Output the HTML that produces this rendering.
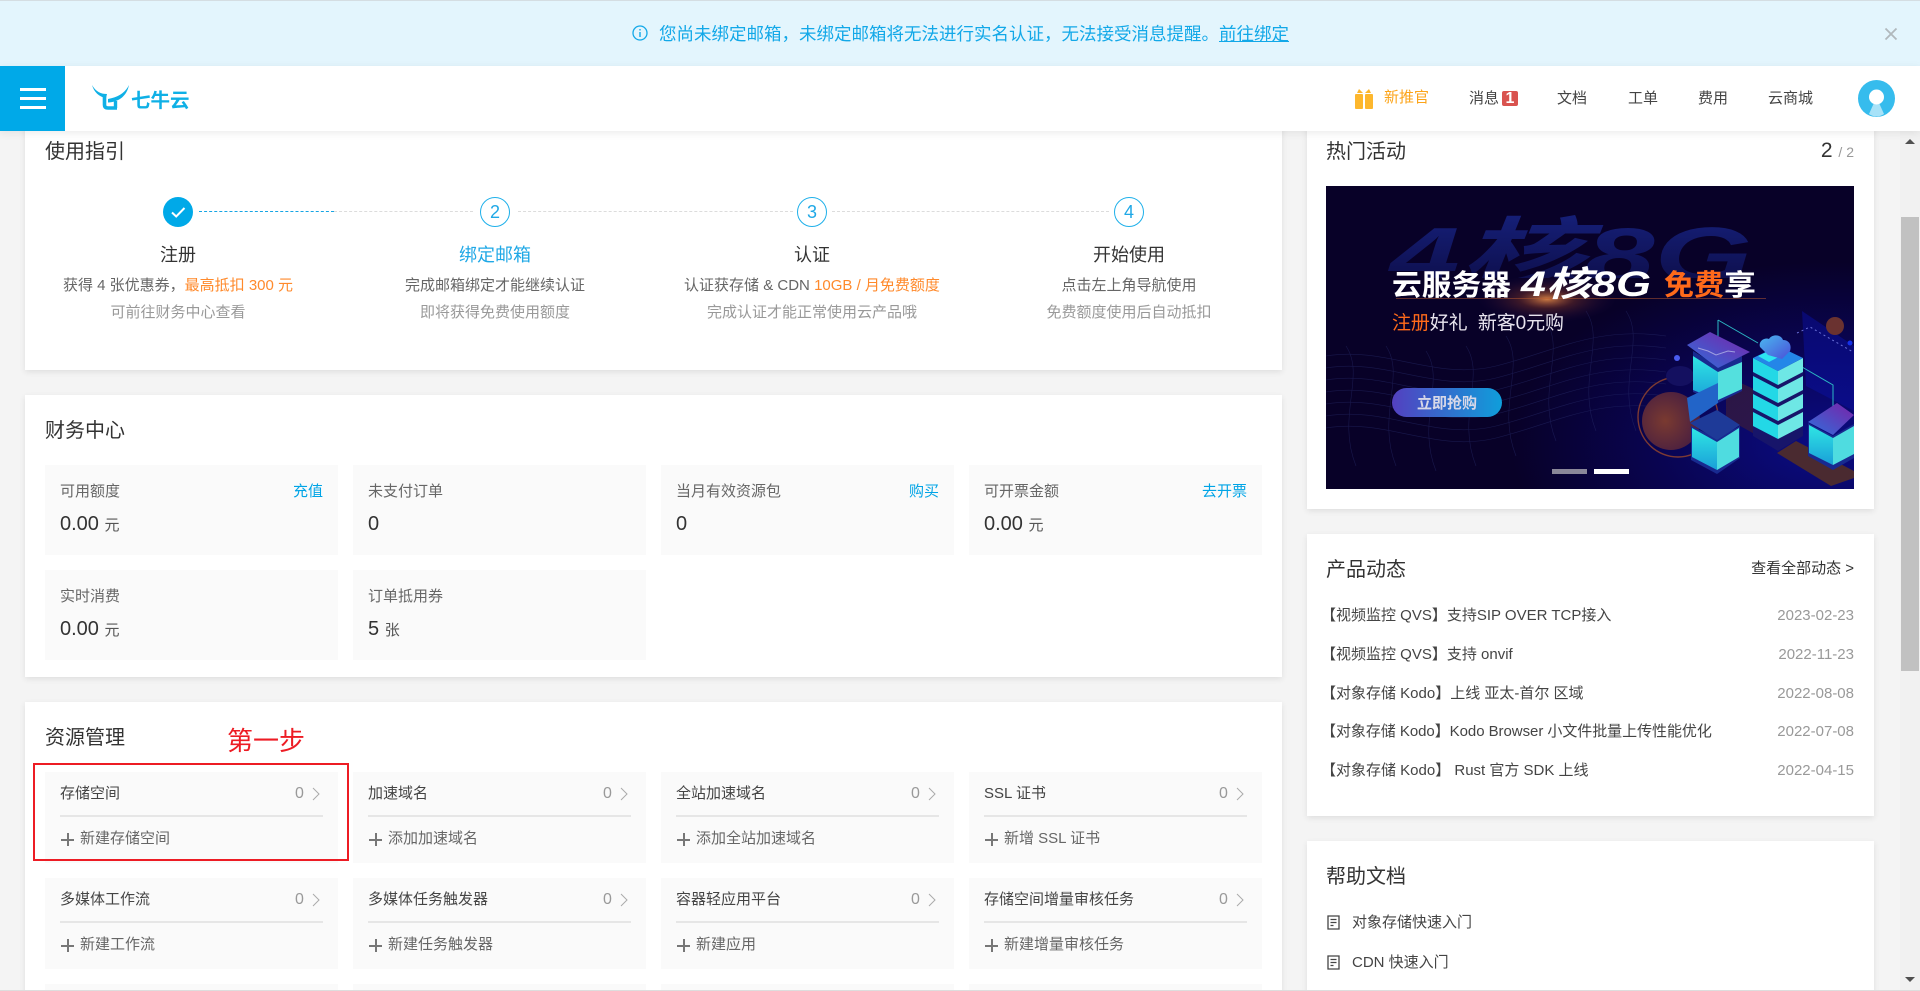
<!DOCTYPE html>
<html lang="zh-CN">
<head>
<meta charset="utf-8">
<title>七牛云</title>
<style>
html,body{margin:0;padding:0;width:1920px;height:991px;overflow:hidden;background:#f4f4f4;}
body{position:relative;font-family:"Liberation Sans","Noto Sans CJK SC",sans-serif;font-size:15px;color:#333;}
.a{position:absolute;}
.t{position:absolute;white-space:nowrap;line-height:20px;height:20px;}
.c{transform:translateX(-50%);}
.r{transform:translateX(-100%);}
.card{position:absolute;background:#fff;box-shadow:0 2px 6px rgba(0,0,0,.09);}
.h{font-size:20px;color:#333;line-height:24px;height:24px;}
.cell{position:absolute;background:#fafafa;width:293px;}
.g{color:#999;}
.d{color:#666;}
.o{color:#ff8a2c;}
.b{color:#00a4e6;}
.s{position:absolute;width:28px;height:28px;border:1.5px solid #1fb0ea;border-radius:50%;background:#fff;color:#1fa8e6;font-size:18px;line-height:28px;text-align:center;}
.ln{position:absolute;height:0;border-top:1px dashed #dcdcdc;top:211px;}
.l{position:absolute;height:2px;background:#e6e6e6;width:263px;}
.v{font-size:20px;color:#333;}
.v small{font-size:15px;color:#555;}
.plus{position:absolute;width:13px;height:13px;}
.plus:before{content:"";position:absolute;left:0;right:0;top:5.5px;height:2px;background:#777;}
.plus:after{content:"";position:absolute;top:0;bottom:0;left:5.5px;width:2px;background:#777;}
.chev{position:absolute;width:8px;height:14px;}
.chev path{fill:none;stroke:#aaa;stroke-width:1;}
</style>
</head>
<body>

<!-- left cards -->
<div class="card" style="left:25px;top:120px;width:1257px;height:250px"></div>
<div class="card" style="left:25px;top:395px;width:1257px;height:282px"></div>
<div class="card" style="left:25px;top:702px;width:1257px;height:300px"></div>

<!-- right cards -->
<div class="card" style="left:1307px;top:120px;width:567px;height:389px"></div>
<div class="card" style="left:1307px;top:534px;width:567px;height:282px"></div>
<div class="card" style="left:1307px;top:841px;width:567px;height:160px"></div>

<!-- guide -->
<div class="t h" style="left:45px;top:140px;line-height:24px;height:24px">使用指引</div>
<div class="a" style="left:163px;top:197px;width:30px;height:30px;border-radius:50%;background:#00a9e8">
<svg width="30" height="30" viewBox="0 0 30 30"><path d="M9 15.5l4.2 4L21.5 11" fill="none" stroke="#fff" stroke-width="2"/></svg></div>
<div class="a" style="left:199px;top:211px;width:135px;border-top:1px dashed #16a5e4"></div>
<div class="ln" style="left:334px;width:139px"></div>
<div class="ln" style="left:518px;width:275px"></div>
<div class="ln" style="left:832px;width:277px"></div>
<div class="s" style="left:480px;top:197px">2</div>
<div class="s" style="left:797px;top:197px">3</div>
<div class="s" style="left:1114px;top:197px">4</div>

<div class="t c" style="left:178px;top:243px;font-size:18px;line-height:24px;height:24px">注册</div>
<div class="t c b" style="left:495px;top:243px;font-size:18px;line-height:24px;height:24px;color:#1fa8e6">绑定邮箱</div>
<div class="t c" style="left:812px;top:243px;font-size:18px;line-height:24px;height:24px">认证</div>
<div class="t c" style="left:1129px;top:243px;font-size:18px;line-height:24px;height:24px">开始使用</div>

<div class="t c d" style="left:178px;top:276px">获得 4 张优惠券，<span class="o">最高抵扣 300 元</span></div>
<div class="t c d" style="left:495px;top:276px">完成邮箱绑定才能继续认证</div>
<div class="t c d" style="left:812px;top:276px">认证获存储 &amp; CDN <span class="o">10GB / 月免费额度</span></div>
<div class="t c d" style="left:1129px;top:276px">点击左上角导航使用</div>

<div class="t c g" style="left:178px;top:303px">可前往财务中心查看</div>
<div class="t c g" style="left:495px;top:303px">即将获得免费使用额度</div>
<div class="t c g" style="left:812px;top:303px">完成认证才能正常使用云产品哦</div>
<div class="t c g" style="left:1129px;top:303px">免费额度使用后自动抵扣</div>

<!-- finance -->
<div class="t h" style="left:45px;top:419px;line-height:24px;height:24px">财务中心</div>
<div class="cell" style="left:45px;top:465px;height:90px"></div>
<div class="cell" style="left:353px;top:465px;height:90px"></div>
<div class="cell" style="left:661px;top:465px;height:90px"></div>
<div class="cell" style="left:969px;top:465px;height:90px"></div>
<div class="cell" style="left:45px;top:570px;height:90px"></div>
<div class="cell" style="left:353px;top:570px;height:90px"></div>

<div class="t d" style="left:60px;top:482px">可用额度</div>
<div class="t r b" style="left:323px;top:482px">充值</div>
<div class="t v" style="left:60px;top:512px;line-height:24px;height:24px">0.00 <small>元</small></div>
<div class="t d" style="left:368px;top:482px">未支付订单</div>
<div class="t v" style="left:368px;top:512px;line-height:24px;height:24px">0</div>
<div class="t d" style="left:676px;top:482px">当月有效资源包</div>
<div class="t r b" style="left:939px;top:482px">购买</div>
<div class="t v" style="left:676px;top:512px;line-height:24px;height:24px">0</div>
<div class="t d" style="left:984px;top:482px">可开票金额</div>
<div class="t r b" style="left:1247px;top:482px">去开票</div>
<div class="t v" style="left:984px;top:512px;line-height:24px;height:24px">0.00 <small>元</small></div>

<div class="t d" style="left:60px;top:587px">实时消费</div>
<div class="t v" style="left:60px;top:617px;line-height:24px;height:24px">0.00 <small>元</small></div>
<div class="t d" style="left:368px;top:587px">订单抵用券</div>
<div class="t v" style="left:368px;top:617px;line-height:24px;height:24px">5 <small>张</small></div>

<!-- resources -->
<div class="t h" style="left:45px;top:726px;line-height:24px;height:24px">资源管理</div>
<div class="t" style="left:227px;top:726px;font-size:26px;color:#ed1c24;line-height:30px;height:30px">第一步</div>

<div class="cell" style="left:45px;top:772px;height:91px"></div>
<div class="cell" style="left:353px;top:772px;height:91px"></div>
<div class="cell" style="left:661px;top:772px;height:91px"></div>
<div class="cell" style="left:969px;top:772px;height:91px"></div>
<div class="cell" style="left:45px;top:878px;height:91px"></div>
<div class="cell" style="left:353px;top:878px;height:91px"></div>
<div class="cell" style="left:661px;top:878px;height:91px"></div>
<div class="cell" style="left:969px;top:878px;height:91px"></div>
<div class="cell" style="left:45px;top:984px;height:20px"></div>
<div class="cell" style="left:353px;top:984px;height:20px"></div>
<div class="cell" style="left:661px;top:984px;height:20px"></div>
<div class="cell" style="left:969px;top:984px;height:20px"></div>

<!-- row 1 -->
<div class="t" style="left:60px;top:784px;color:#444">存储空间</div>
<div class="t g" style="left:295px;top:784px;font-size:16px">0</div>
<svg class="chev" style="left:312px;top:787px" viewBox="0 0 8 14"><path d="M1 1l6 6-6 6"/></svg>
<div class="l" style="left:60px;top:815px"></div>
<div class="plus" style="left:61px;top:833px"></div>
<div class="t d" style="left:80px;top:829px">新建存储空间</div>

<div class="t" style="left:368px;top:784px;color:#444">加速域名</div>
<div class="t g" style="left:603px;top:784px;font-size:16px">0</div>
<svg class="chev" style="left:620px;top:787px" viewBox="0 0 8 14"><path d="M1 1l6 6-6 6"/></svg>
<div class="l" style="left:368px;top:815px"></div>
<div class="plus" style="left:369px;top:833px"></div>
<div class="t d" style="left:388px;top:829px">添加加速域名</div>

<div class="t" style="left:676px;top:784px;color:#444">全站加速域名</div>
<div class="t g" style="left:911px;top:784px;font-size:16px">0</div>
<svg class="chev" style="left:928px;top:787px" viewBox="0 0 8 14"><path d="M1 1l6 6-6 6"/></svg>
<div class="l" style="left:676px;top:815px"></div>
<div class="plus" style="left:677px;top:833px"></div>
<div class="t d" style="left:696px;top:829px">添加全站加速域名</div>

<div class="t" style="left:984px;top:784px;color:#444">SSL 证书</div>
<div class="t g" style="left:1219px;top:784px;font-size:16px">0</div>
<svg class="chev" style="left:1236px;top:787px" viewBox="0 0 8 14"><path d="M1 1l6 6-6 6"/></svg>
<div class="l" style="left:984px;top:815px"></div>
<div class="plus" style="left:985px;top:833px"></div>
<div class="t d" style="left:1004px;top:829px">新增 SSL 证书</div>

<!-- row 2 -->
<div class="t" style="left:60px;top:890px;color:#444">多媒体工作流</div>
<div class="t g" style="left:295px;top:890px;font-size:16px">0</div>
<svg class="chev" style="left:312px;top:893px" viewBox="0 0 8 14"><path d="M1 1l6 6-6 6"/></svg>
<div class="l" style="left:60px;top:921px"></div>
<div class="plus" style="left:61px;top:939px"></div>
<div class="t d" style="left:80px;top:935px">新建工作流</div>

<div class="t" style="left:368px;top:890px;color:#444">多媒体任务触发器</div>
<div class="t g" style="left:603px;top:890px;font-size:16px">0</div>
<svg class="chev" style="left:620px;top:893px" viewBox="0 0 8 14"><path d="M1 1l6 6-6 6"/></svg>
<div class="l" style="left:368px;top:921px"></div>
<div class="plus" style="left:369px;top:939px"></div>
<div class="t d" style="left:388px;top:935px">新建任务触发器</div>

<div class="t" style="left:676px;top:890px;color:#444">容器轻应用平台</div>
<div class="t g" style="left:911px;top:890px;font-size:16px">0</div>
<svg class="chev" style="left:928px;top:893px" viewBox="0 0 8 14"><path d="M1 1l6 6-6 6"/></svg>
<div class="l" style="left:676px;top:921px"></div>
<div class="plus" style="left:677px;top:939px"></div>
<div class="t d" style="left:696px;top:935px">新建应用</div>

<div class="t" style="left:984px;top:890px;color:#444">存储空间增量审核任务</div>
<div class="t g" style="left:1219px;top:890px;font-size:16px">0</div>
<svg class="chev" style="left:1236px;top:893px" viewBox="0 0 8 14"><path d="M1 1l6 6-6 6"/></svg>
<div class="l" style="left:984px;top:921px"></div>
<div class="plus" style="left:985px;top:939px"></div>
<div class="t d" style="left:1004px;top:935px">新建增量审核任务</div>

<!-- red box -->
<div class="a" style="left:33px;top:763px;width:312px;height:94px;border:2px solid #ed1c24"></div>

<!-- right: activity -->
<div class="t h" style="left:1326px;top:140px;line-height:24px;height:24px">热门活动</div>
<div class="t r" style="left:1854px;top:139px;line-height:24px;height:24px;font-size:21px">2 <span style="font-size:14px;color:#999">/ 2</span></div>

<svg class="a" style="left:1326px;top:186px" width="528" height="303" viewBox="0 0 528 303">
<defs>
<linearGradient id="gh" x1="0" y1="0" x2="0" y2="1"><stop offset="0" stop-color="#16207a"/><stop offset=".75" stop-color="#0e1050"/><stop offset="1" stop-color="#080230"/></linearGradient>
<radialGradient id="bg" cx=".95" cy=".85" r=".6"><stop offset="0" stop-color="#0a0c84"/><stop offset=".55" stop-color="#090450"/><stop offset="1" stop-color="#080128"/></radialGradient>
<radialGradient id="fl" cx=".5" cy=".5" r=".5"><stop offset="0" stop-color="#ff9a4a" stop-opacity=".8"/><stop offset=".4" stop-color="#a04428" stop-opacity=".35"/><stop offset="1" stop-color="#30104a" stop-opacity="0"/></radialGradient>
<linearGradient id="btn" x1="0" y1="0" x2="1" y2="0"><stop offset="0" stop-color="#5340c0"/><stop offset="1" stop-color="#0f9edb"/></linearGradient>
<linearGradient id="cy" x1="0" y1="0" x2="0" y2="1"><stop offset="0" stop-color="#2fe6e4"/><stop offset="1" stop-color="#1a9fd8"/></linearGradient>
<linearGradient id="top" x1="0" y1="1" x2="1" y2="0"><stop offset="0" stop-color="#2f6fdc"/><stop offset="1" stop-color="#7a22a8"/></linearGradient>
<linearGradient id="cl" x1="0" y1="0" x2="1" y2="1"><stop offset="0" stop-color="#4ab8f0"/><stop offset="1" stop-color="#4a50d8"/></linearGradient>
<radialGradient id="or" cx=".4" cy=".5" r=".6"><stop offset="0" stop-color="#7a3a30"/><stop offset="1" stop-color="#4a1f40"/></radialGradient>
<clipPath id="gc"><rect x="0" y="0" width="528" height="92"/></clipPath>
</defs>
<rect width="528" height="303" fill="url(#bg)"/>
<polygon points="451,267 470,255 528,285 528,292 505,300" fill="#4a2a30"/>
<polygon points="400,190 432,205 432,250 400,232" fill="#3a1c3c" opacity=".7"/>
<polygon points="476,125 528,160 528,225 480,200" fill="#0a0fa0" opacity=".5"/>
<g fill="none" stroke="#2a3070" stroke-width=".6" opacity=".5">
<path d="M0 170C60 160 110 195 170 180S270 140 340 150"/>
<path d="M0 182C60 172 110 207 170 192S270 152 340 162"/>
<path d="M0 194C60 184 110 219 170 204S270 164 340 174"/>
<path d="M0 206C60 196 110 231 170 216S270 176 340 186"/>
<path d="M0 218C60 208 110 243 170 228S270 188 340 198"/>
<path d="M0 230C60 220 110 255 170 240S270 200 340 210"/>
<path d="M0 242C60 232 110 267 170 252S270 212 340 222"/>
<path d="M20 160C40 190 10 230 30 280M60 160C80 190 50 230 70 280M100 165C120 195 90 235 110 285M140 160C160 190 130 230 150 280M180 150C200 180 170 220 190 270M220 135C240 165 210 205 230 255M260 125C280 155 250 195 270 245M300 125C320 155 290 195 310 245"/>
</g>
<text x="64" y="96" clip-path="url(#gc)" font-family="Liberation Sans,Noto Sans CJK SC,sans-serif" font-size="78" font-weight="700" font-style="italic" fill="url(#gh)" textLength="362" lengthAdjust="spacingAndGlyphs">4核8G</text>
<ellipse cx="221" cy="113" rx="70" ry="24" fill="url(#fl)"/>
<rect x="70" y="112" width="370" height="1" fill="#b85a30" opacity=".5"/>
<text x="66" y="109" font-family="Liberation Sans,Noto Sans CJK SC,sans-serif" font-size="29" font-weight="700" fill="#fff" textLength="119" lengthAdjust="spacingAndGlyphs">云服务器</text>
<text x="195" y="110" font-family="Liberation Sans,Noto Sans CJK SC,sans-serif" font-size="35" font-weight="700" font-style="italic" fill="#fff" textLength="130" lengthAdjust="spacingAndGlyphs">4核8G</text>
<text x="338" y="109" font-family="Liberation Sans,Noto Sans CJK SC,sans-serif" font-size="29" font-weight="700" fill="#ff6a1a" textLength="60" lengthAdjust="spacingAndGlyphs">免费</text>
<text x="398" y="109" font-family="Liberation Sans,Noto Sans CJK SC,sans-serif" font-size="29" font-weight="700" fill="#fff" textLength="32" lengthAdjust="spacingAndGlyphs">享</text>
<text x="66" y="143" font-family="Liberation Sans,Noto Sans CJK SC,sans-serif" font-size="19" fill="#e8e4ee" textLength="172" xml:space="preserve"><tspan fill="#ff6a1a">注册</tspan>好礼  新客0元购</text>
<rect x="66" y="202" width="110" height="29" rx="14.5" fill="url(#btn)"/>
<text x="121" y="222" text-anchor="middle" font-family="Liberation Sans,Noto Sans CJK SC,sans-serif" font-size="15" font-weight="700" fill="#d8d8e8">立即抢购</text>
<rect x="226" y="283" width="35" height="5" fill="#8a8799"/>
<rect x="268" y="283" width="35" height="5" fill="#fff"/>

<!-- spheres -->
<circle cx="509" cy="140" r="9" fill="#6a3230"/>
<circle cx="352" cy="231" r="40" fill="none" stroke="#8a4030" stroke-width="1.4" opacity=".9"/>
<circle cx="345" cy="235" r="29" fill="url(#or)"/>
<ellipse cx="354" cy="190" rx="14" ry="10" fill="#141060"/>
<circle cx="351" cy="172" r="3" fill="#4a5cf0"/>
<circle cx="524" cy="157" r="2.500" fill="#1430e8"/>

<!-- connectors -->
<g fill="none" stroke="#2cb8c4" stroke-width="1"><path d="M392 134V182M392 134L432 157M476 181L507 199V232"/></g>
<path d="M471 147L484 141L527 166" fill="none" stroke="#6a70d8" stroke-width="1" stroke-dasharray="2 3"/>

<!-- top-left server -->
<polygon points="367,165 392,180 416,170 416,205 392,217 367,206" fill="#182a90"/>
<polygon points="367,170 392,186 392,214 367,204" fill="url(#cy)"/>
<polygon points="392,186 416,176 416,203 392,214" fill="#54e0de"/>
<polygon points="361,159 384,146 424,166 392,182" fill="url(#top)"/>
<path d="M372 162l10 3 8 4 12-4 7 1" fill="none" stroke="#a0a0e0" stroke-width="1"/>

<!-- stack -->
<polygon points="427,172 427,250 452,265 477,250 477,172" fill="#17156a"/>
<polygon points="427,172 452,185 452,199 427,186" fill="#23d8e6"/><polygon points="452,185 477,172 477,186 452,199" fill="#6ee7e5"/><polygon points="427,172 452,160 477,172 452,185" fill="#2486e8"/>
<polygon points="432,170 452,161 462,166 443,176" fill="#2de6f0"/>
<polygon points="427,190 452,203 452,217 427,204" fill="#23d8e6"/><polygon points="452,203 477,190 477,204 452,217" fill="#6ee7e5"/>
<polygon points="427,208 452,221 452,235 427,222" fill="#23d8e6"/><polygon points="452,221 477,208 477,222 452,235" fill="#6ee7e5"/>
<polygon points="427,226 452,239 452,253 427,240" fill="#23d8e6"/><polygon points="452,239 477,226 477,240 452,253" fill="#6ee7e5"/>
<path d="M434 161c-2-6 5-10 9-8 3-5 12-5 14 1 6 0 9 5 7 11l-8 8-14-4z" fill="url(#cl)"/>

<!-- laptop panel -->
<polygon points="361,212 392,197 392,217 364,236" fill="#2264c8"/>

<!-- lower-left server -->
<polygon points="365,240 391,252 414,240 414,272 391,288 365,274" fill="#182a90"/>
<polygon points="366,242 391,256 391,284 366,271" fill="url(#cy)"/>
<polygon points="391,256 413,242 413,271 391,284" fill="#4fdce0"/>
<polygon points="364,237 391,224 414,239 391,254" fill="#1e3a98"/>

<!-- right server -->
<polygon points="482,237 507,250 528,238 528,272 507,284 482,270" fill="#182a90"/>
<polygon points="483,239 507,252 507,279 483,267" fill="url(#cy)"/>
<polygon points="507,252 528,240 528,268 507,279" fill="#4fdce0"/>
<polygon points="482,236 511,217 528,229 507,249" fill="url(#top)"/>
</svg>

<!-- right: news -->
<div class="t h" style="left:1326px;top:558px;line-height:24px;height:24px">产品动态</div>
<div class="t r" style="left:1854px;top:559px">查看全部动态 &gt;</div>
<div class="t" style="left:1321px;top:606px;color:#444">【视频监控 QVS】支持SIP OVER TCP接入</div>
<div class="t r g" style="left:1854px;top:606px">2023-02-23</div>
<div class="t" style="left:1321px;top:645px;color:#444">【视频监控 QVS】支持 onvif</div>
<div class="t r g" style="left:1854px;top:645px">2022-11-23</div>
<div class="t" style="left:1321px;top:684px;color:#444">【对象存储 Kodo】上线 亚太-首尔 区域</div>
<div class="t r g" style="left:1854px;top:684px">2022-08-08</div>
<div class="t" style="left:1321px;top:722px;color:#444;letter-spacing:-.05px">【对象存储 Kodo】Kodo Browser 小文件批量上传性能优化</div>
<div class="t r g" style="left:1854px;top:722px">2022-07-08</div>
<div class="t" style="left:1321px;top:761px;color:#444">【对象存储 Kodo】 Rust 官方 SDK 上线</div>
<div class="t r g" style="left:1854px;top:761px">2022-04-15</div>

<!-- right: help -->
<div class="t h" style="left:1326px;top:865px;line-height:24px;height:24px">帮助文档</div>
<svg class="a" style="left:1327px;top:915px" width="13" height="15" viewBox="0 0 13 15"><path d="M1 1h11v13H1zM3.500 4.500h6M3.500 7.500h6M3.500 10.500h3" fill="none" stroke="#444" stroke-width="1.300"/></svg>
<div class="t" style="left:1352px;top:913px;color:#444">对象存储快速入门</div>
<svg class="a" style="left:1327px;top:955px" width="13" height="15" viewBox="0 0 13 15"><path d="M1 1h11v13H1zM3.500 4.500h6M3.500 7.500h6M3.500 10.500h3" fill="none" stroke="#444" stroke-width="1.300"/></svg>
<div class="t" style="left:1352px;top:953px;color:#444">CDN 快速入门</div>

<!-- scrollbar -->
<div class="a" style="left:1900px;top:131px;width:20px;height:860px;background:#f1f1f1"></div>
<div class="a" style="left:1901px;top:217px;width:18px;height:454px;background:#c1c1c1"></div>
<div class="a" style="left:1905px;top:139px;width:0;height:0;border-left:5px solid transparent;border-right:5px solid transparent;border-bottom:5px solid #505050"></div>
<div class="a" style="left:1905px;top:977px;width:0;height:0;border-left:5px solid transparent;border-right:5px solid transparent;border-top:5px solid #505050"></div>
<div class="a" style="left:0;top:990px;width:1920px;height:1px;background:#ddd"></div>

<!-- notice banner -->
<div class="a" style="left:0;top:0;width:1920px;height:66px;background:#e3f5fd;border-top:1px solid #d4dde2;box-sizing:border-box"></div>
<svg class="a" style="left:632px;top:25px" width="16" height="16" viewBox="0 0 16 16"><circle cx="8" cy="8" r="7" fill="none" stroke="#12a8e8" stroke-width="1.300"/><path d="M8 4v1.500M8 7v5" stroke="#12a8e8" stroke-width="1.400"/></svg>
<div class="t" style="left:659px;top:22px;font-size:17.500px;line-height:24px;height:24px;color:#12a8e8">您尚未绑定邮箱，未绑定邮箱将无法进行实名认证，无法接受消息提醒。<u>前往绑定</u></div>
<svg class="a" style="left:1884px;top:27px" width="14" height="14" viewBox="0 0 14 14"><path d="M1.500 1.500l11 11M12.500 1.500l-11 11" stroke="#b0b8bc" stroke-width="1.800" fill="none"/></svg>

<!-- header -->
<div class="a" style="left:0;top:66px;width:1920px;height:65px;background:#fff;box-shadow:0 2px 8px rgba(0,0,0,.08)"></div>
<div class="a" style="left:0;top:66px;width:65px;height:65px;background:#00a9e8"></div>
<div class="a" style="left:20px;top:88px;width:26px;height:3px;background:#fff"></div>
<div class="a" style="left:20px;top:97px;width:26px;height:3px;background:#fff"></div>
<div class="a" style="left:20px;top:106px;width:26px;height:3px;background:#fff"></div>
<svg class="a" style="left:85px;top:80px" width="50" height="36" viewBox="85 80 50 36">
<path d="M92 85C96 92 101 94 107 94L106 98C99 97 94 92 92 85Z" fill="#0fb0e6"/>
<path d="M104.500 95V105Q104.500 108 108 108H117" fill="none" stroke="#0fb0e6" stroke-width="3.600"/>
<path d="M129 85C125 93 118 97 108 99L108 102.500C120 102 127 95 129 85Z" fill="#0fb0e6"/>
<path d="M115.500 101V108" fill="none" stroke="#0fb0e6" stroke-width="3.400"/>
</svg>
<div class="t" style="left:131px;top:89px;font-size:19.500px;font-weight:700;line-height:24px;height:24px;color:#0fb0e6">七牛云</div>

<svg class="a" style="left:1355px;top:88px" width="18" height="21" viewBox="0 0 18 21">
<path d="M2 5l2-4 4 4zM10 5l4-4 2 4z" fill="#fdb72d"/>
<rect x="0" y="6" width="8" height="15" rx="1" fill="#fdb72d"/><rect x="10" y="6" width="8" height="15" rx="1" fill="#fdb72d"/>
</svg>
<div class="t" style="left:1384px;top:88px;color:#fca419">新推官</div>
<div class="t" style="left:1469px;top:89px;color:#444">消息</div>
<div class="a" style="left:1502px;top:91px;width:16px;height:15px;background:#d9534f;border-radius:2px;color:#fff;font-size:16px;font-weight:700;line-height:15px;text-align:center">1</div>
<div class="t" style="left:1557px;top:89px;color:#444">文档</div>
<div class="t" style="left:1628px;top:89px;color:#444">工单</div>
<div class="t" style="left:1698px;top:89px;color:#444">费用</div>
<div class="t" style="left:1768px;top:89px;color:#444">云商城</div>
<svg class="a" style="left:1858px;top:80px" width="37" height="37" viewBox="0 0 37 37">
<circle cx="18.500" cy="18.500" r="18.500" fill="#36bced"/>
<path d="M11 34L15.500 24H21.500L26 34Q18.500 39 11 34Z" fill="#a8e2f8"/>
<circle cx="18.500" cy="17" r="7.500" fill="#fff"/>
</svg>

</body>
</html>
